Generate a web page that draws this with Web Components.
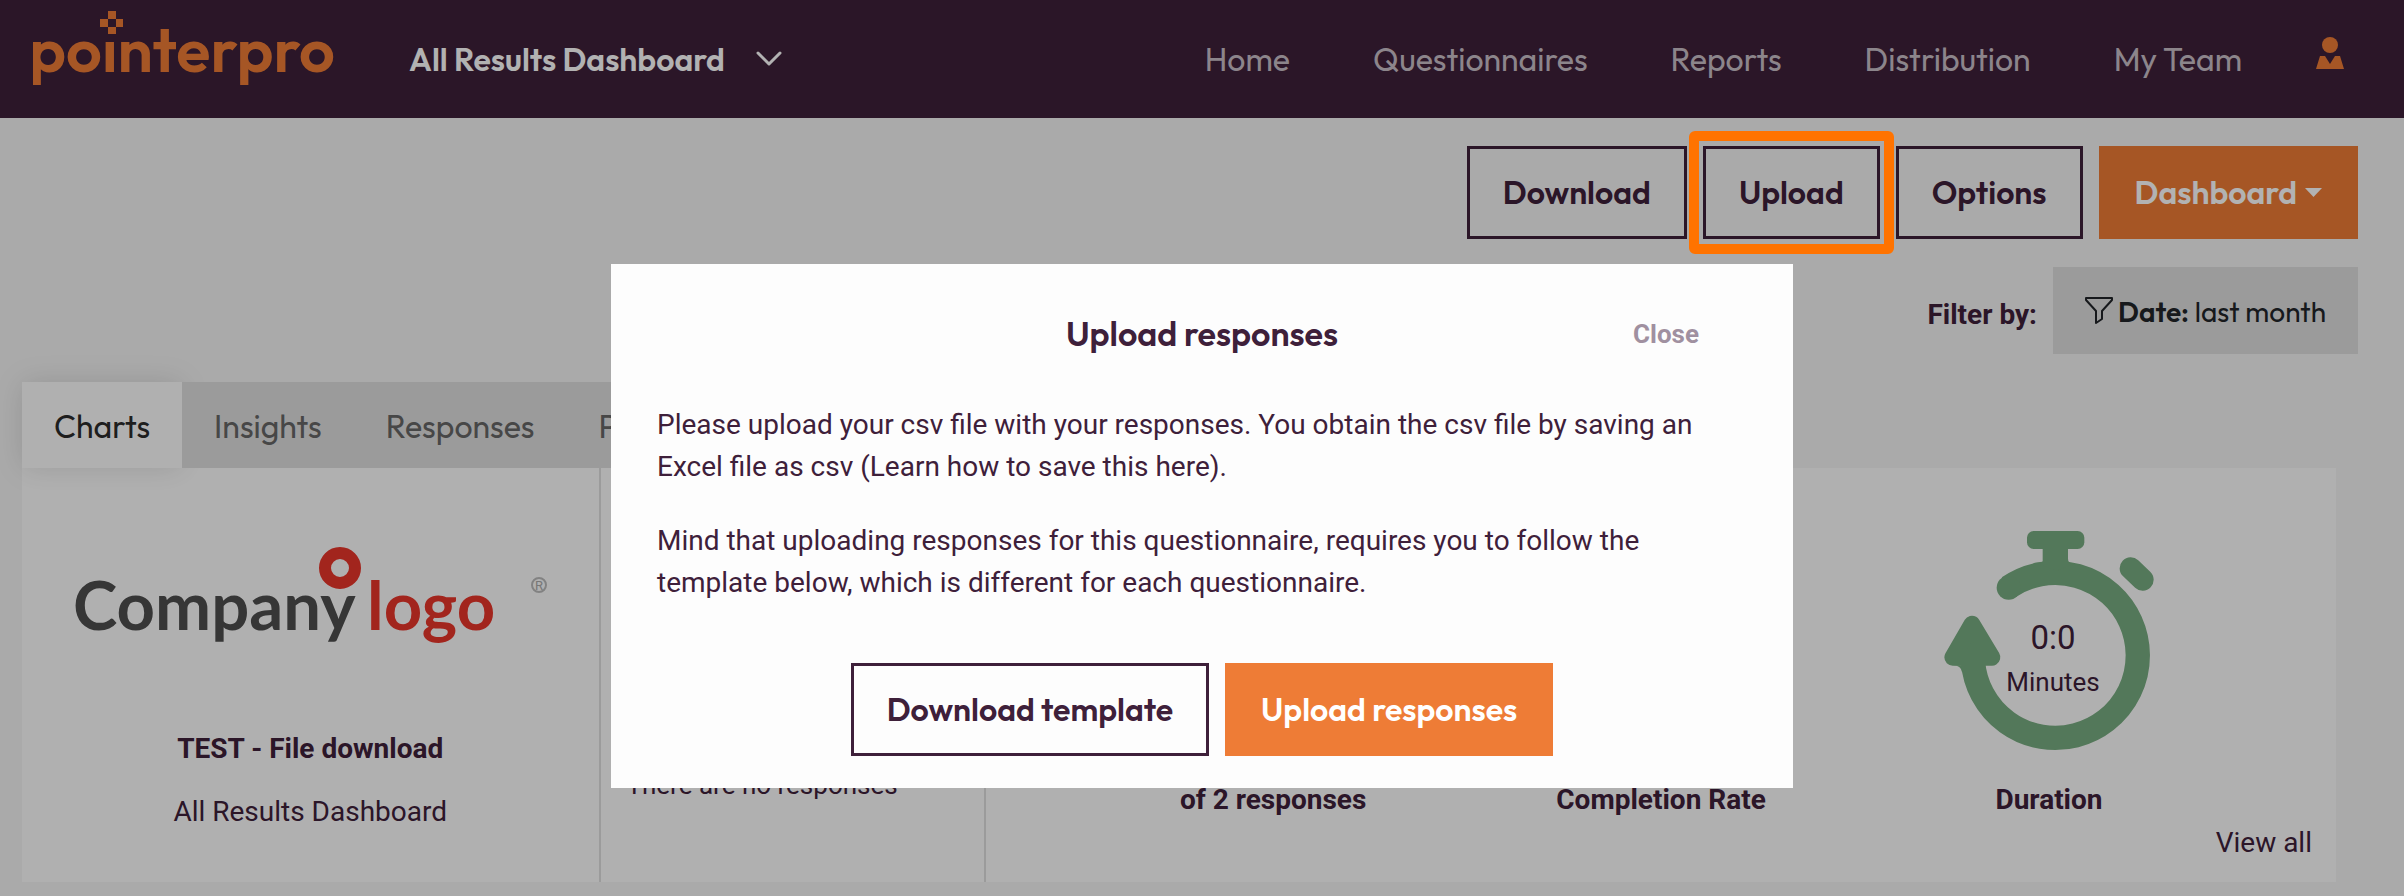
<!DOCTYPE html>
<html lang="en">
<head>
<meta charset="utf-8">
<meta name="viewport" content="width=device-width, initial-scale=1">
<title>All Results Dashboard</title>
<style>
  body {
    --plum: #3e203a;
    --orange: #ee7c36;
    --grey: #dfdfdf;
    --display: Outfit, Lato, sans-serif;
    margin: 0;
    background: #f4f4f4;
    color: var(--plum);
    font: 28px/42px Roboto, sans-serif;
  }
</style>
</head>
<body>
<results-page></results-page>

<script>
/**
 * Attach an open shadow root filled with the given markup.
 */
function render (el, html) {
  var template = document.createElement('template')
  template.innerHTML = html
  el.attachShadow({ mode: 'open' }).appendChild(template.content.cloneNode(true))
}

/**
 * Button with the variants primary and highlight.
 */
class AppButton extends HTMLElement {
  constructor () {
    super()
    render(this, `
      <style>
        :host {
          display: inline-block;
          position: relative;
        }
        button {
          display: flex;
          align-items: center;
          gap: 8px;
          box-sizing: border-box;
          margin: 0;
          padding: 24px 33px;
          border: 3px solid var(--plum);
          background: transparent;
          color: var(--plum);
          font: 600 32px/39px var(--display);
          white-space: nowrap;
          cursor: pointer;
        }
        :host(.primary) button {
          background: var(--orange);
          border-color: var(--orange);
          color: #fff;
        }
        :host(.highlight)::after {
          content: "";
          position: absolute;
          z-index: 20;
          inset: -15px -14px;
          border: 10px solid #ff7300;
          border-radius: 6px;
          pointer-events: none;
        }
      </style>
      <button type="button"><slot></slot></button>
    `)
  }
}
window.customElements.define('app-button', AppButton)

class BrandLogo extends HTMLElement {
  constructor () {
    super()
    render(this, `
      <style>
        :host { display: block; }
        svg { display: block; }
        text { font: 600 63px var(--display); }
      </style>
      <svg width="302" height="118" viewBox="0 0 302 118" fill="#ee7c36">
        <text x="-4" y="72">pointerpro</text>
        <path fill="#3e203a" d="M66 8h26v29H66z"/>
        <path d="M75 11h8v8h-8zM67 19h8v8h-8zM83 19h7v8h-7zM75 27h8v7h-8z"/>
      </svg>
    `)
  }
}
window.customElements.define('brand-logo', BrandLogo)

class TopBar extends HTMLElement {
  constructor () {
    super()
    render(this, `
      <style>
        :host {
          display: flex;
          align-items: center;
          height: 118px;
          padding: 0 60px 0 33px;
          background: var(--plum);
          font: 32px/40px var(--display);
        }
        .switch {
          display: flex;
          align-items: center;
          gap: 31px;
          margin-left: 74px;
          padding: 0;
          border: 0;
          background: none;
          color: #fff;
          font: inherit;
          font-weight: 600;
          cursor: pointer;
        }
        nav {
          display: flex;
          gap: 83px;
          margin-left: auto;
        }
        a {
          color: #c9bfc8;
          text-decoration: none;
        }
        .user {
          display: block;
          margin: -12px 0 0 74px;
        }
        svg { display: block; }
      </style>
      <brand-logo></brand-logo>
      <button class="switch" type="button">All Results Dashboard
        <svg width="26" height="16" viewBox="0 0 26 16" fill="none" stroke="#fff" stroke-width="3" stroke-linecap="round" stroke-linejoin="round"><path d="M2 2l11 11L24 2"/></svg>
      </button>
      <nav>
        <a href="#home">Home</a>
        <a href="#questionnaires">Questionnaires</a>
        <a href="#reports">Reports</a>
        <a href="#distribution">Distribution</a>
        <a href="#team">My Team</a>
      </nav>
      <a class="user" href="#account" aria-label="Account">
        <svg width="28" height="32" viewBox="0 0 28 32" fill="#ee7c36"><circle cx="14" cy="8" r="8"/><path d="M4 19h5l5 8 5-8h5l4 13H0z"/></svg>
      </a>
    `)
  }
}
window.customElements.define('top-bar', TopBar)

class ActionBar extends HTMLElement {
  constructor () {
    super()
    render(this, `
      <style>
        :host {
          display: flex;
          flex-direction: column;
          align-items: flex-end;
          gap: 28px;
          padding: 28px 46px 28px 22px;
        }
        .row {
          display: flex;
          align-items: center;
          gap: 16px;
        }
        .filter {
          display: flex;
          align-items: center;
          gap: 5px;
          height: 87px;
          padding: 2px 32px 0;
          border: 0;
          background: var(--grey);
          color: #212529;
          font: 28px/42px var(--display);
          white-space: pre;
          cursor: pointer;
        }
        .filter b { font-weight: 600; }
        .filter svg { margin-bottom: 4px; }
        .label {
          margin-top: 8px;
          font-weight: 700;
        }
      </style>
      <div class="row">
        <app-button>Download</app-button>
        <app-button class="highlight">Upload</app-button>
        <app-button>Options</app-button>
        <app-button class="primary">Dashboard
          <svg width="17" height="9" viewBox="0 0 17 9" fill="#fff"><path d="M0 0h17L8.500 9z"/></svg>
        </app-button>
      </div>
      <div class="row">
        <label class="label" for="filter">Filter by:</label>
        <button class="filter" id="filter" type="button"><svg width="28" height="28" viewBox="0 0 28 28" fill="none" stroke="#212529" stroke-width="2" stroke-linejoin="round"><path d="M1 2h26v2L17 15v8l-6 4V15L1 4z"/></svg><span><b>Date:</b> last month</span></button>
      </div>
    `)
  }
}
window.customElements.define('action-bar', ActionBar)

class TabBar extends HTMLElement {
  constructor () {
    super()
    render(this, `
      <style>
        :host { display: flex; }
        button {
          position: relative;
          z-index: 2;
          padding: 24px 32px 22px;
          border: 0;
          background: var(--grey);
          color: #666;
          font: 32px/40px var(--display);
          cursor: pointer;
        }
        button[aria-selected=true] {
          z-index: 1;
          background: #fcfcfc;
          color: #2c2c2c;
          box-shadow: 0 0 30px rgba(0, 0, 0, .12);
        }
      </style>
      <button type="button" role="tab" aria-selected="true">Charts</button>
      <button type="button" role="tab">Insights</button>
      <button type="button" role="tab">Responses</button>
      <button type="button" role="tab">PDF</button>
    `)
    this.setAttribute('role', 'tablist')
  }
}
window.customElements.define('tab-bar', TabBar)

class CompanyLogo extends HTMLElement {
  constructor () {
    super()
    render(this, `
      <style>
        :host { display: block; }
        svg { display: block; }
        .word { font: 700 67px Lato, sans-serif; }
        .mark { font: 13px Roboto, sans-serif; }
      </style>
      <svg width="480" height="110" viewBox="70 540 480 110">
        <text class="word" x="73" y="630" fill="#4e4e4e">Company</text>
        <text class="word" x="367" y="630" fill="#e8352a">logo</text>
        <circle cx="340" cy="568" r="15" fill="none" stroke="#e8352a" stroke-width="12"/>
        <circle cx="539" cy="585" r="7" fill="none" stroke="#bbb" stroke-width="2"/>
        <text class="mark" x="539" y="590" fill="#aaa" text-anchor="middle">R</text>
      </svg>
    `)
  }
}
window.customElements.define('company-logo', CompanyLogo)

/**
 * Stopwatch with the duration passed in as value and unit.
 */
class StopWatch extends HTMLElement {
  constructor () {
    super()
    render(this, `
      <style>
        :host {
          display: grid;
          justify-items: center;
        }
        svg, div { grid-area: 1 / 1; }
        svg { display: block; }
        div {
          padding: 85px 0 0 8px;
          text-align: center;
          font-size: 26px;
          line-height: 45px;
        }
        ::slotted(b) {
          display: block;
          font-size: 33px;
          font-weight: 400;
        }
      </style>
      <svg width="210" height="222" viewBox="132 90 630 666" fill="#78ac81" stroke="#78ac81">
        <path fill="none" stroke-width="73" d="M219 484A247.500 247.500 0 1 0 326 262"/>
        <circle cx="326" cy="263" r="36" stroke="none"/>
        <path stroke="none" d="M428 140h76v36q0 14 16 16l-50 20-56-20q14-4 14-10z"/>
        <rect x="381" y="93" width="172" height="54" rx="20" stroke="none"/>
        <path stroke-width="50" stroke-linejoin="round" d="M216 372l60 100H158z"/>
        <path stroke="none" d="M160 496q22 0 26 20l10-20z"/>
        <path stroke-width="66" stroke-linecap="round" d="M692 205l36 34"/>
      </svg>
      <div><slot></slot></div>
    `)
  }
}
window.customElements.define('stop-watch', StopWatch)

class SummaryCard extends HTMLElement {
  constructor () {
    super()
    render(this, `
      <style>
        :host {
          display: grid;
          grid-template-columns: 3fr 2fr 7fr;
          background: #fdfdfd;
        }
        section {
          box-sizing: border-box;
          min-height: 414px;
          border-right: 2px solid var(--grey);
        }
        section:last-child { border: 0; }
        .company {
          display: flex;
          flex-direction: column;
          align-items: center;
          padding-top: 72px;
        }
        h2 {
          margin: 78px 0 21px;
          font: inherit;
          font-weight: 700;
        }
        p { margin: 0; }
        .empty {
          display: flex;
          align-items: flex-end;
          padding: 0 26px 76px;
          font-size: 26px;
        }
        .stats {
          display: grid;
          grid-template-columns: repeat(3, 1fr);
          align-items: end;
          padding: 62px 93px 0;
          text-align: center;
          font-weight: 700;
        }
        stop-watch {
          margin-bottom: 27px;
          font-weight: 400;
        }
        .all {
          display: block;
          padding: 1px 24px 16px;
          color: inherit;
          text-align: right;
          text-decoration: none;
        }
      </style>
      <section class="company">
        <company-logo></company-logo>
        <h2>TEST - File download</h2>
        <p>All Results Dashboard</p>
      </section>
      <section class="empty"><p>There are no responses</p></section>
      <section>
        <div class="stats">
          <div>of 2 responses</div>
          <div>Completion Rate</div>
          <div><stop-watch><b>0:0</b>Minutes</stop-watch>Duration</div>
        </div>
        <a class="all" href="#all">View all</a>
      </section>
    `)
  }
}
window.customElements.define('summary-card', SummaryCard)

class UploadDialog extends HTMLElement {
  constructor () {
    super()
    render(this, `
      <style>
        :host {
          position: fixed;
          z-index: 10;
          inset: 0;
          display: flex;
          justify-content: center;
          align-items: flex-start;
          padding-top: 264px;
          background: rgba(0, 0, 0, .3);
        }
        .dialog {
          box-sizing: border-box;
          width: 1182px;
          padding: 50px 46px 32px;
          background: #fdfdfd;
        }
        header {
          display: grid;
          grid-template-columns: 1fr auto 1fr;
          align-items: center;
          margin-bottom: 50px;
        }
        h1 {
          grid-column: 2;
          margin: 0;
          font: 600 34px/40px var(--display);
        }
        .close {
          justify-self: end;
          margin-right: 48px;
          padding: 0;
          border: 0;
          background: none;
          color: #a090a0;
          font: 700 26px/40px Roboto, sans-serif;
          cursor: pointer;
        }
        p { margin: 0 0 32px; }
        footer {
          display: flex;
          justify-content: center;
          gap: 16px;
          margin-top: 59px;
        }
      </style>
      <div class="dialog" role="dialog" aria-labelledby="title">
        <header>
          <h1 id="title">Upload responses</h1>
          <button class="close" type="button">Close</button>
        </header>
        <p>Please upload your csv file with your responses. You obtain the csv file by saving an Excel file as csv (Learn how to save this here).</p>
        <p>Mind that uploading responses for this questionnaire, requires you to follow the template below, which is different for each questionnaire.</p>
        <footer>
          <app-button>Download template</app-button>
          <app-button class="primary">Upload responses</app-button>
        </footer>
      </div>
    `)
  }
}
window.customElements.define('upload-dialog', UploadDialog)

class ResultsPage extends HTMLElement {
  constructor () {
    super()
    render(this, `
      <style>
        :host { display: block; }
        main { padding: 0 68px 14px 22px; }
      </style>
      <top-bar></top-bar>
      <action-bar></action-bar>
      <main>
        <tab-bar></tab-bar>
        <summary-card></summary-card>
      </main>
      <upload-dialog></upload-dialog>
    `)
  }
}
window.customElements.define('results-page', ResultsPage)
</script>
</body>
</html>
